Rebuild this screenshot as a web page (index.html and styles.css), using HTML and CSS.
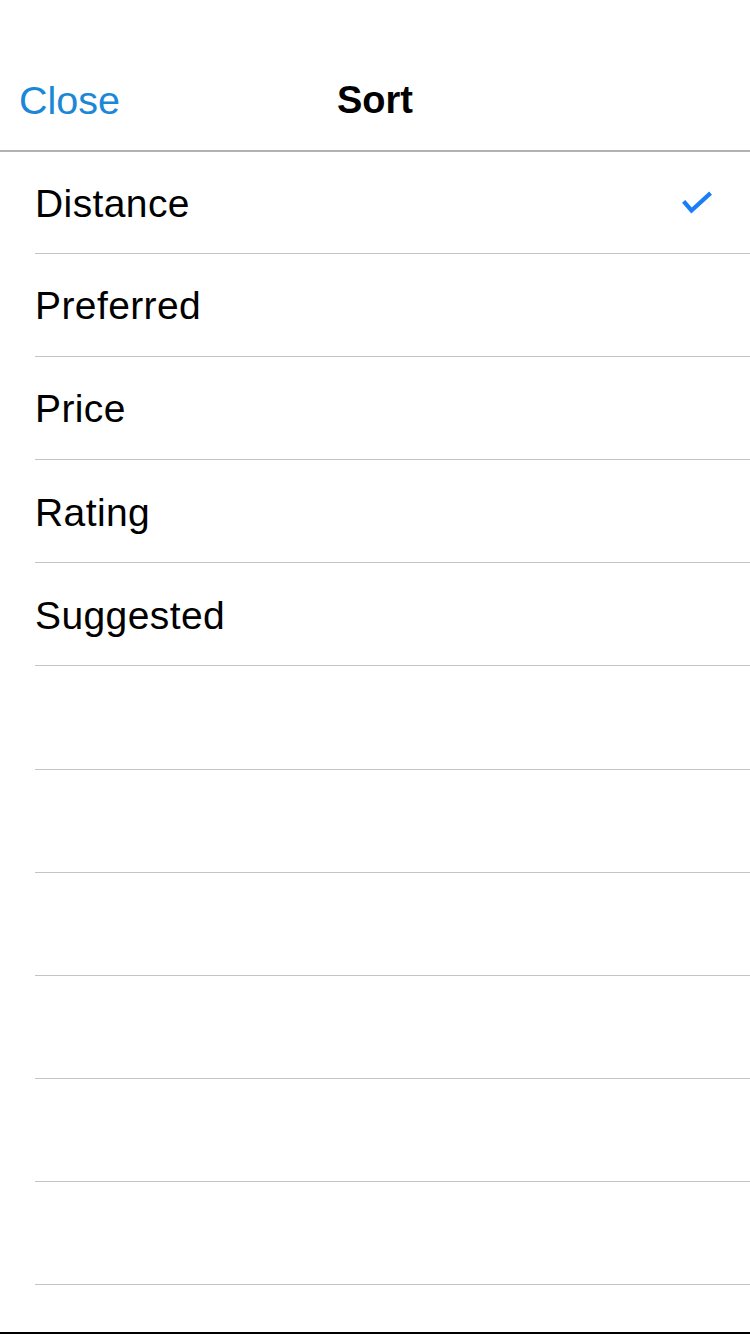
FILE: index.html
```html
<!DOCTYPE html>
<html>
<head>
<meta charset="utf-8">
<link rel="stylesheet" href="styles.css">
</head>
<body>
<div class="screen">
  <header class="nav">
    <span class="nav-btn">Close</span>
    <span class="nav-title">Sort</span>
  </header>
  <ul class="list">
    <li class="row"><span class="label">Distance</span>
      <svg class="check" width="32" height="26" viewBox="0 0 32 26"><path d="M5 13 L11.5 20.5 L29 4.5" fill="none" stroke="#1a7ff7" stroke-width="4.2" stroke-linecap="square" stroke-linejoin="miter"/></svg>
    </li>
    <li class="row"><span class="label">Preferred</span></li>
    <li class="row"><span class="label">Price</span></li>
    <li class="row"><span class="label">Rating</span></li>
    <li class="row"><span class="label">Suggested</span></li>
    <li class="row"></li>
    <li class="row"></li>
    <li class="row"></li>
    <li class="row"></li>
    <li class="row"></li>
    <li class="row"></li>
  </ul>
  <div class="spacer"></div>
  <div class="bottom-edge"></div>
</div>
</body>
</html>
```
FILE: styles.css
```css
html, body {
  margin: 0;
  padding: 0;
  background: #ffffff;
}
.screen {
  width: 750px;
  height: 1334px;
  display: flex;
  flex-direction: column;
  font-family: "Liberation Sans", Arial, sans-serif;
  overflow: hidden;
}
.nav {
  border-bottom: 2px solid #b2b2b2;
  display: grid;
  grid-template-columns: 1fr auto 1fr;
  align-items: center;
  padding-top: 51px;
  box-sizing: content-box;
  height: 99px;
}
.nav-btn {
  grid-column: 1;
  justify-self: start;
  padding-left: 19px;
  color: #1b87d7;
  font-size: 39.5px;
}
.nav-title {
  grid-column: 2;
  font-weight: bold;
  font-size: 38px;
  color: #000;
}
.list {
  list-style: none;
  margin: 0;
  padding: 0 0 0 35px;
}
.row {
  height: 103.2px;
  box-sizing: border-box;
  border-bottom: 1px solid #c4c3c8;
  display: flex;
  align-items: center;
  justify-content: space-between;
  padding-right: 38px;
}
.row:first-child {
  height: 101.6px;
}
.label {
  font-size: 39px;
  color: #000;
  letter-spacing: 0.4px;
  padding-top: 3px;
}
.check {
  display: block;
  margin-top: 2px;
}
.spacer {
  flex: 1;
}
.bottom-edge {
  height: 2px;
  background: #000;
}
```
